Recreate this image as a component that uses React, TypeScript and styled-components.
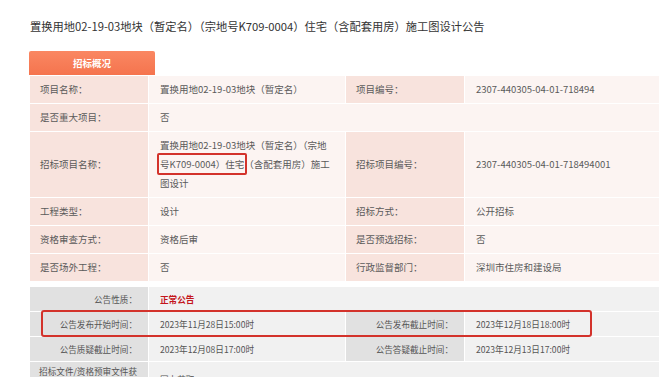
import React from "react";
import styled, { createGlobalStyle, css } from "styled-components";

const GlobalStyle = createGlobalStyle`
  html, body {
    margin: 0;
    padding: 0;
    background: #ffffff;
  }
  body {
    font-family: "Noto Sans CJK SC", "Noto Sans", sans-serif;
    color: #555;
  }
`;

type Tone = "warm" | "grey";

const COLS = "118px 196px 118px 194px";

const Page = styled.div`
  width: 660px;
  height: 377px;
  overflow: hidden;
  padding: 16px 0 0 30px;
  box-sizing: border-box;
`;

const Title = styled.h1`
  margin: 0;
  font-size: 11.25px;
  font-weight: normal;
  line-height: 20px;
  color: #333;
  white-space: nowrap;
`;

const Tab = styled.div`
  margin-top: 15px;
  margin-left: -1px;
  width: 126px;
  height: 24px;
  border-radius: 2px 2px 0 0;
  background: linear-gradient(#fa8762, #f5744e);
  color: #fff;
  font-size: 9.5px;
  font-weight: bold;
  display: flex;
  align-items: center;
  justify-content: center;
`;

const Section = styled.div<{ gapTop?: number }>`
  width: 629px;
  margin-top: ${({ gapTop }) => gapTop ?? 0}px;
`;

const Row = styled.div<{ height: number; highlight?: boolean }>`
  position: relative;
  display: grid;
  grid-template-columns: ${COLS};
  column-gap: 1px;
  margin-top: 1px;
  min-height: ${({ height }) => height}px;
  ${({ highlight }) =>
    highlight &&
    css`
      &::after {
        content: "";
        position: absolute;
        left: 11px;
        top: -2px;
        width: 551px;
        bottom: -1px;
        border: 2px solid #d3322b;
        border-radius: 3px;
        box-sizing: border-box;
        pointer-events: none;
      }
    `}
`;

const Cell = styled.div<{ tone: Tone; label?: boolean; span?: number }>`
  display: flex;
  align-items: center;
  box-sizing: border-box;
  ${({ span }) => span && css`grid-column: span ${span};`}
  ${({ tone, label }) =>
    tone === "warm"
      ? css`
          font-size: 9.5px;
          line-height: 19px;
          padding: 4px ${label ? "10px" : "11px"};
          background: ${label ? "#f8e3dd" : "#fcf4f2"};
          color: #5a5a5a;
        `
      : css`
          font-size: 8.6px;
          line-height: 15px;
          padding: ${label ? "2px 11px 2px 4px" : "2px 11px"};
          background: ${label ? "#e1e1e1" : "#f1f1f1"};
          color: #555;
          justify-content: ${label ? "flex-end" : "flex-start"};
          text-align: ${label ? "right" : "left"};
        `}
`;

const Boxed = styled.span`
  border: 2px solid #d3322b;
  border-radius: 2px;
  padding: 2px 1px;
  margin: 0 -3px;
`;

const Notice = styled.span`
  color: #c4161c;
  font-weight: bold;
`;

type Pair = [string, React.ReactNode];

const upperRows: { height: number; cells: Pair[] }[] = [
  {
    height: 26,
    cells: [
      ["项目名称：", "置换用地02-19-03地块（暂定名）"],
      ["项目编号：", "2307-440305-04-01-718494"],
    ],
  },
  { height: 26, cells: [["是否重大项目：", "否"]] },
  {
    height: 65,
    cells: [
      [
        "招标项目名称：",
        <span>
          置换用地02-19-03地块（暂定名）（宗地<Boxed>号K709-0004）住宅</Boxed>
          （含配套用房）施工图设计
        </span>,
      ],
      ["招标项目编号：", "2307-440305-04-01-718494001"],
    ],
  },
  {
    height: 26,
    cells: [
      ["工程类型：", "设计"],
      ["招标方式：", "公开招标"],
    ],
  },
  {
    height: 26,
    cells: [
      ["资格审查方式：", "资格后审"],
      ["是否预选招标：", "否"],
    ],
  },
  {
    height: 26,
    cells: [
      ["是否场外工程：", "否"],
      ["行政监督部门：", "深圳市住房和建设局"],
    ],
  },
];

const lowerRows: { height: number; highlight?: boolean; cells: Pair[] }[] = [
  { height: 24, cells: [["公告性质：", <Notice>正常公告</Notice>]] },
  {
    height: 24,
    highlight: true,
    cells: [
      ["公告发布开始时间：", "2023年11月28日15:00时"],
      ["公告发布截止时间：", "2023年12月18日18:00时"],
    ],
  },
  {
    height: 24,
    cells: [
      ["公告质疑截止时间：", "2023年12月08日17:00时"],
      ["公告答疑截止时间：", "2023年12月13日17:00时"],
    ],
  },
  {
    height: 34,
    cells: [["招标文件/资格预审文件获取方式：", "网上获取"]],
  },
];

const renderRow = (
  cells: Pair[],
  tone: Tone,
  height: number,
  key: number,
  highlight?: boolean
) => (
  <Row key={key} height={height} highlight={highlight}>
    {cells.map(([label, value], i) => (
      <React.Fragment key={i}>
        <Cell tone={tone} label>
          {label}
        </Cell>
        <Cell tone={tone} span={cells.length === 1 ? 3 : undefined}>
          {value}
        </Cell>
      </React.Fragment>
    ))}
  </Row>
);

export default function App() {
  return (
    <>
      <GlobalStyle />
      <Page>
        <Title>
          置换用地02-19-03地块（暂定名）（宗地号K709-0004）住宅（含配套用房）施工图设计公告
        </Title>
        <Tab>招标概况</Tab>
        <Section>
          {upperRows.map((r, i) => renderRow(r.cells, "warm", r.height, i))}
        </Section>
        <Section gapTop={6}>
          {lowerRows.map((r, i) =>
            renderRow(r.cells, "grey", r.height, i, r.highlight)
          )}
        </Section>
      </Page>
    </>
  );
}
